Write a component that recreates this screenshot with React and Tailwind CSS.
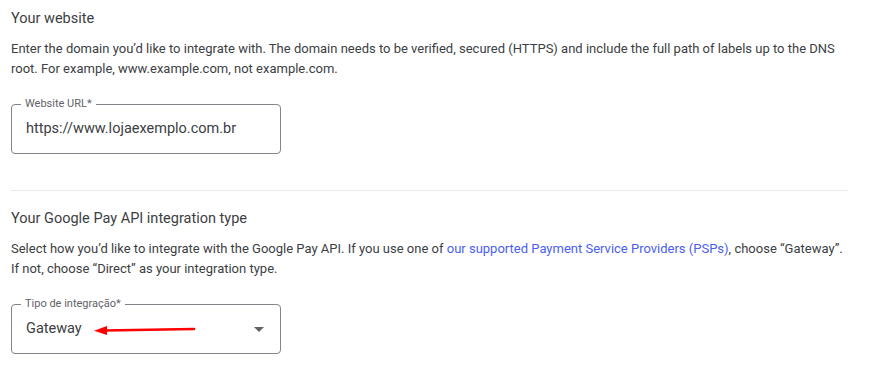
const roboto = { fontFamily: "Roboto, 'Liberation Sans', sans-serif" };

function OutlinedField({ label, value, trailing, children }) {
  return (
    <div className="relative mt-[25px] flex h-[50px] w-[270px] items-center rounded-[4px] border border-[#80868b] pl-[14px] pr-[14px]">
      <span className="absolute -top-[8px] left-[9px] bg-white px-[4px] text-[11px] leading-[14px] text-[#5f6368]">
        {label}
      </span>
      <span className="flex-1 text-[14.5px] text-[#3c4043]">{value}</span>
      {trailing}
      {children}
    </div>
  );
}

export default function App() {
  return (
    <div className="min-h-[368px] bg-white pl-[11px] pt-[7px]" style={roboto}>
      <div className="w-[837px]">
        <section>
          <h2 className="text-[14.5px] leading-[24px] text-[#3c4043]">Your website</h2>
          <p className="mt-[8px] text-[13px] leading-[20px] text-[#3c4043]">
            Enter the domain you’d like to integrate with. The domain needs to be verified, secured (HTTPS) and include
            the full path of labels up to the DNS root. For example, www.example.com, not example.com.
          </p>
          <OutlinedField label="Website URL*" value="https://www.lojaexemplo.com.br" />
        </section>

        <div className="mt-[36px] h-px bg-[#e8eaed]" />

        <section className="pt-[16px]">
          <h2 className="text-[14.5px] leading-[24px] text-[#3c4043]">Your Google Pay API integration type</h2>
          <p className="mt-[8px] text-[13px] leading-[20px] text-[#3c4043]">
            Select how you’d like to integrate with the Google Pay API. If you use one of{" "}
            <a className="text-[#4a5ef4]">our supported Payment Service Providers (PSPs)</a>, choose “Gateway”. If not,
            choose “Direct” as your integration type.
          </p>
          <OutlinedField
            label="Tipo de integração*"
            value="Gateway"
            trailing={
              <svg width="10" height="5" viewBox="0 0 10 5" className="mr-[2px]">
                <path d="M0 0 L10 0 L5 5 Z" fill="#5f6368" />
              </svg>
            }
          >
            <svg
              className="absolute left-[82px] top-[19px]"
              width="102"
              height="12"
              viewBox="0 0 102 12"
            >
              <path d="M10 6.5 L100 5" stroke="#ff0000" strokeWidth="2.6" strokeLinecap="round" />
              <path d="M0 6.8 L13 2 L13 11 Z" fill="#ff0000" />
            </svg>
          </OutlinedField>
        </section>
      </div>
    </div>
  );
}
